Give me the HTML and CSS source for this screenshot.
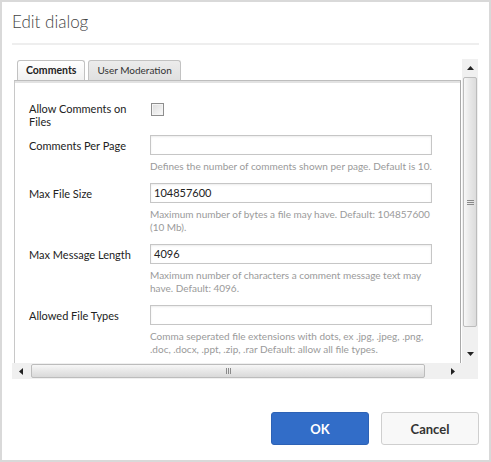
FILE: index.html
```html
<!DOCTYPE html>
<html>
<head>
<meta charset="utf-8">
<link rel="stylesheet" href="styles.css">
</head>
<body>
<div class="dialog">
  <header class="head"><h1 class="title">Edit dialog</h1></header>
  <div class="frame">
    <div class="viewport">
      <div class="tabs">
        <div class="tab active">Comments</div>
        <div class="tab">User Moderation</div>
      </div>
      <div class="panel">
        <div class="form">
          <div class="row">
            <div class="label label-top">Allow Comments on Files</div>
            <div class="field"><span class="check"></span></div>
          </div>
          <div class="row">
            <div class="label">Comments Per Page</div>
            <div class="field">
              <div class="input"></div>
              <div class="help">Defines the number of comments shown per page. Default is 10.</div>
            </div>
          </div>
          <div class="row">
            <div class="label">Max File Size</div>
            <div class="field">
              <div class="input">104857600</div>
              <div class="help">Maximum number of bytes a file may have. Default: 104857600<br>(10 Mb).</div>
            </div>
          </div>
          <div class="row">
            <div class="label">Max Message Length</div>
            <div class="field">
              <div class="input">4096</div>
              <div class="help">Maximum number of characters a comment message text may<br>have. Default: 4096.</div>
            </div>
          </div>
          <div class="row">
            <div class="label">Allowed File Types</div>
            <div class="field">
              <div class="input"></div>
              <div class="help">Comma seperated file extensions with dots, ex .jpg, .jpeg, .png,<br>.doc, .docx, .ppt, .zip, .rar Default: allow all file types.</div>
            </div>
          </div>
        </div>
      </div>
    </div>
    <div class="vbar">
      <div class="sbtn"><svg width="7" height="4" viewBox="0 0 7 4"><polygon points="0,4 7,4 3.5,0" fill="#222"/></svg></div>
      <div class="vthumb"><span class="grip-v"><i></i><i></i><i></i></span></div>
      <div class="strack"></div>
      <div class="sbtn"><svg width="7" height="4" viewBox="0 0 7 4"><polygon points="0,0 7,0 3.5,4" fill="#222"/></svg></div>
    </div>
    <div class="hbar">
      <div class="sbtn"><svg width="4" height="7" viewBox="0 0 4 7"><polygon points="4,0 4,7 0,3.5" fill="#222"/></svg></div>
      <div class="hthumb"><span class="grip-h"><i></i><i></i><i></i></span></div>
      <div class="strack"></div>
      <div class="sbtn"><svg width="4" height="7" viewBox="0 0 4 7"><polygon points="0,0 0,7 4,3.5" fill="#222"/></svg></div>
    </div>
    <div class="corner"></div>
  </div>
  <div class="actions">
    <button class="btn btn-primary">OK</button>
    <button class="btn">Cancel</button>
  </div>
</div>
</body>
</html>
```
FILE: styles.css
```css
* { box-sizing: border-box; }
html, body { margin: 0; padding: 0; background: #fff; }
body { font-family: Lato, "Open Sans", sans-serif; color: #333; }

.dialog {
  width: 491px;
  height: 462px;
  border: 2px solid #d9d9d9;
  padding: 10px 10px 0 10px;
  background: #fff;
}

.head {
  border-bottom: 2px solid #eeeeee;
  padding-bottom: 11px;
}
.title {
  margin: 0;
  font-size: 17px;
  line-height: 20px;
  font-weight: 300;
  color: #444;
}

.frame {
  margin-top: 14px;
  width: 466px;
  height: 320px;
  display: grid;
  grid-template-columns: 450px 16px;
  grid-template-rows: 304px 16px;
}
.viewport {
  overflow: hidden;
  padding-top: 1px;
  background: #fff;
}

.tabs {
  display: flex;
  gap: 3px;
  margin-left: 5px;
  height: 20px;
}
.tab {
  height: 20px;
  padding: 0 8px;
  border: 1px solid #c2c2c2;
  border-bottom: none;
  border-radius: 3px 3px 0 0;
  background: linear-gradient(#ececec, #e0e0e0);
  font-size: 10px;
  line-height: 19px;
  color: #333;
  white-space: nowrap;
}
.tab.active {
  background: linear-gradient(#ffffff, #f1f1f1);
  font-weight: bold;
  font-size: 10.5px;
  color: #222;
  padding: 0 8px;
}

.panel {
  margin-left: 2px;
  width: 447px;
  height: 400px;
  border-left: 1px solid #c8c8c8;
  border-right: 1px solid #a9a9a9;
  border-top: 1px solid #bdbdbd;
  box-shadow: inset 0 2px 0 #e2e2e2;
  padding: 21px 0 0 14px;
}

.form {
  display: flex;
  flex-direction: column;
  gap: 7px;
}
.row {
  display: grid;
  grid-template-columns: 121px 282px;
}
.label {
  font-size: 11px;
  line-height: 13px;
  color: #222;
  padding-top: 4px;
}
.label.label-top {
  padding-top: 0;
  padding-right: 10px;
}
.field { display: flex; flex-direction: column; }

.check {
  display: block;
  width: 13px;
  height: 13px;
  margin: 1px 0 0 1px;
  border: 1px solid #8e8e8e;
  background: linear-gradient(135deg, #dcdcdc, #fafafa);
  box-shadow: inset 0 0 0 1px #f4f4f4;
}

.input {
  height: 20px;
  border: 1px solid #c6c6c6;
  box-shadow: inset 0 1px 2px rgba(0,0,0,0.08);
  background: #fff;
  font-size: 11px;
  line-height: 18px;
  padding-left: 3px;
  color: #222;
}
.help {
  margin-top: 5px;
  margin-bottom: 3px;
  font-size: 10px;
  line-height: 13px;
  color: #9a9a9a;
  white-space: nowrap;
}

/* scrollbars */
.vbar {
  display: flex;
  flex-direction: column;
  background: #f0f0f0;
}
.hbar {
  display: flex;
  background: #f0f0f0;
}
.corner { background: #f0f0f0; }
.sbtn {
  flex: 0 0 18px;
  display: flex;
  align-items: center;
  justify-content: center;
}
.strack { flex: 1; }
.vthumb {
  flex: 0 0 250px;
  margin: 0 1px;
  border: 1px solid #bcbcbc;
  border-radius: 2px;
  background: linear-gradient(90deg, #f7f7f7, #e9e9e9 45%, #dcdcdc);
  display: flex;
  align-items: center;
  justify-content: center;
}
.hthumb {
  flex: 0 0 394px;
  margin: 1px 0 0 1px;
  height: 14px;
  border: 1px solid #bcbcbc;
  border-radius: 2px;
  background: linear-gradient(#f7f7f7, #e9e9e9 45%, #d9d9d9);
  display: flex;
  align-items: center;
  justify-content: center;
}
.grip-v { display: flex; flex-direction: column; gap: 1px; }
.grip-v i { display: block; width: 7px; height: 1px; background: #8a8a8a; }
.grip-h { display: flex; gap: 1px; }
.grip-h i { display: block; width: 1px; height: 6px; background: #8a8a8a; }

.actions {
  margin-top: 33px;
  display: flex;
  justify-content: flex-end;
  gap: 12px;
}
.btn {
  width: 98px;
  height: 33px;
  border: 1px solid #cfcfcf;
  border-radius: 3px;
  background: #f8f8f8;
  font-family: Lato, "Open Sans", sans-serif;
  font-weight: bold;
  font-size: 13px;
  color: #333;
  padding: 0;
}
.btn-primary {
  background: #326dc8;
  border-color: #2d62b5;
  color: #fff;
}
```
